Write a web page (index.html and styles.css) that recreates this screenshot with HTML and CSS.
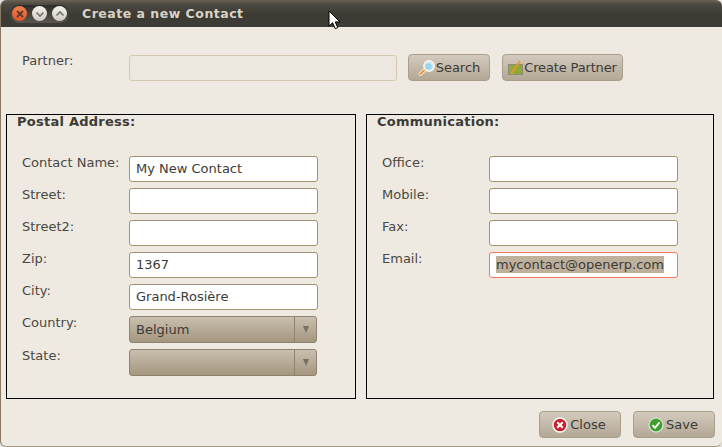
FILE: index.html
```html
<!DOCTYPE html>
<html lang="en">
<head>
    <meta charset="UTF-8">
    <title>Create a new Contact</title>
    <link rel="stylesheet" href="styles.css">
</head>
<body>
    <div class="window">
        <div class="titlebar">
            <div class="win-buttons">
                <span class="win-btn win-close">
                    <svg width="10" height="10" viewBox="0 0 10 10"><path d="M2 2l6 6M8 2l-6 6" stroke="#5a3a2c" stroke-width="1.8" fill="none"/></svg>
                </span>
                <span class="win-btn">
                    <svg width="10" height="10" viewBox="0 0 10 10"><path d="M1.5 3.5L5 7l3.5-3.5" stroke="#77736a" stroke-width="1.6" fill="none"/></svg>
                </span>
                <span class="win-btn">
                    <svg width="10" height="10" viewBox="0 0 10 10"><path d="M1.5 6.5L5 3l3.5 3.5" stroke="#77736a" stroke-width="1.6" fill="none"/></svg>
                </span>
            </div>
            <span class="win-title">Create a new Contact</span>
        </div>

        <div class="content">
            <div class="partner-row">
                <label class="field-label">Partner:</label>
                <div class="entry entry-disabled"></div>
                <button class="btn btn-search">
                    <svg width="17" height="17" viewBox="0 0 17 17">
                        <path d="M2.5 15l4.5-4.5" stroke="#fff" stroke-width="3.4" stroke-linecap="round"/>
                        <path d="M2.5 15l4.5-4.5" stroke="#e8963c" stroke-width="2.2" stroke-linecap="round"/>
                        <circle cx="11" cy="7" r="5.2" fill="#cdebf8" stroke="#f6f6f2" stroke-width="1.4"/>
                        <circle cx="10.5" cy="7.5" r="3.2" fill="#9ed3ea"/>
                    </svg>
                    Search
                </button>
                <button class="btn btn-create">
                    <svg width="15" height="16" viewBox="0 0 15 16">
                        <rect x="0.5" y="4.5" width="14" height="10" fill="#8fa83c" stroke="#8d8a78"/>
                        <path d="M3 14L12 1" stroke="#e89a20" stroke-width="1.8"/>
                    </svg>
                    Create Partner
                </button>
            </div>

            <div class="panels">
                <div class="panel panel-left">
                    <div class="panel-title">Postal Address:</div>
                    <div class="form">
                        <label class="field-label">Contact Name:</label>
                        <div class="entry">My New Contact</div>
                        <label class="field-label">Street:</label>
                        <div class="entry"></div>
                        <label class="field-label">Street2:</label>
                        <div class="entry"></div>
                        <label class="field-label">Zip:</label>
                        <div class="entry">1367</div>
                        <label class="field-label">City:</label>
                        <div class="entry">Grand-Rosière</div>
                        <label class="field-label">Country:</label>
                        <div class="combo"><span class="combo-text">Belgium</span><span class="combo-arrow"></span></div>
                        <label class="field-label">State:</label>
                        <div class="combo"><span class="combo-text"></span><span class="combo-arrow"></span></div>
                    </div>
                </div>
                <div class="panel panel-right">
                    <div class="panel-title">Communication:</div>
                    <div class="form">
                        <label class="field-label">Office:</label>
                        <div class="entry"></div>
                        <label class="field-label">Mobile:</label>
                        <div class="entry"></div>
                        <label class="field-label">Fax:</label>
                        <div class="entry"></div>
                        <label class="field-label">Email:</label>
                        <div class="entry entry-focus"><span class="selected">mycontact@openerp.com</span></div>
                    </div>
                </div>
            </div>

            <div class="actions">
                <button class="btn btn-action">
                    <svg width="16" height="16" viewBox="0 0 16 16">
                        <circle cx="8" cy="8" r="7" fill="#c8202c" stroke="#fff" stroke-width="1.4"/>
                        <path d="M5.2 5.2l5.6 5.6M10.8 5.2l-5.6 5.6" stroke="#fff" stroke-width="2"/>
                    </svg>
                    Close
                </button>
                <button class="btn btn-action">
                    <svg width="16" height="16" viewBox="0 0 16 16">
                        <circle cx="8" cy="8" r="7" fill="#3f9e2c" stroke="#dfe8d8" stroke-width="1.2"/>
                        <path d="M4.5 8.2l2.5 2.6 4.5-5.4" stroke="#fff" stroke-width="1.8" fill="none"/>
                    </svg>
                    Save
                </button>
            </div>
        </div>

        <svg class="cursor" width="14" height="20" viewBox="0 0 14 20">
            <path d="M1 1v15l3.6-3.3 2.6 6 2.6-1.1-2.6-5.7H12z" fill="#fff" stroke="#000" stroke-width="1"/>
        </svg>
    </div>
</body>
</html>
```

FILE: styles.css
```css
html, body {
    margin: 0;
    padding: 0;
    background: #e9e5de;
}

body {
    font-family: "DejaVu Sans", sans-serif;
    font-size: 13px;
    color: #3c3b37;
}

.window {
    position: relative;
    width: 722px;
    height: 447px;
    box-sizing: border-box;
    display: flex;
    flex-direction: column;
    overflow: hidden;
    background: #eeeae2;
    border-radius: 6px;
    border-left: 1px solid #8a7a62;
    border-bottom: 1px solid #a89a80;
}

/* title bar */
.titlebar {
    height: 27px;
    flex: none;
    display: flex;
    align-items: center;
    padding-left: 9px;
    background: linear-gradient(#6b6355 0, #4d4a41 4px, #3d3b34 14px, #3c3b35 100%);
}

.win-buttons {
    box-sizing: border-box;
    width: 59px;
    height: 18px;
    display: flex;
    gap: 5px;
    align-items: center;
    justify-content: center;
    border-radius: 9px;
    background: linear-gradient(#2e2c28, #5a574f);
}

.win-btn {
    width: 15px;
    height: 15px;
    border-radius: 50%;
    background: linear-gradient(#f4f2ec, #cfcbc2);
    display: flex;
    align-items: center;
    justify-content: center;
}

.win-close {
    background: linear-gradient(#f0814f, #e0562a);
}

.win-title {
    margin-left: 13px;
    font-weight: bold;
    font-size: 12.5px;
    letter-spacing: 0.5px;
    color: #d8d3c6;
}

.content {
    flex: 1;
    display: flex;
    flex-direction: column;
}

/* partner row */
.partner-row {
    display: flex;
    align-items: flex-start;
    margin-top: 27px;
    padding-left: 21px;
    height: 60px;
}

.partner-row .field-label {
    width: 107px;
    flex: none;
}

.partner-row .entry {
    width: 268px;
    flex: none;
    margin-top: 1px;
}

.btn-search {
    margin-left: 11px;
    width: 82px;
}

.btn-create {
    margin-left: 12px;
    width: 121px;
    letter-spacing: -0.15px;
    gap: 3px;
    background: linear-gradient(#c4b8a6, #a2937e);
}

/* panels */
.panels {
    display: flex;
    gap: 10px;
    padding-left: 5px;
}

.panel {
    box-sizing: border-box;
    height: 285px;
    border: 1px solid #000;
}

.panel-left {
    width: 350px;
}

.panel-right {
    width: 348px;
}

.panel-title {
    font-weight: bold;
    letter-spacing: 0.25px;
    color: #3c3b37;
    padding-left: 10px;
    line-height: 14px;
}

.form {
    display: grid;
    grid-template-columns: 107px 189px;
    row-gap: 6px;
    margin-top: 27px;
    padding-left: 15px;
}

.field-label {
    color: #4a4842;
    line-height: 14px;
    display: block;
}

/* inputs */
.entry {
    box-sizing: border-box;
    height: 26px;
    padding: 0 6px;
    line-height: 24px;
    background: #fff;
    border: 1px solid #a39174;
    border-radius: 3px;
    white-space: nowrap;
    color: #3c3b37;
}

.entry-disabled {
    background: #ede8df;
    border-color: #d6c9b2;
}

.entry-focus {
    border-color: #f07a62;
}

.selected {
    display: inline-block;
    line-height: 17px;
    background: #bfb09c;
}

.combo {
    box-sizing: border-box;
    height: 27px;
    display: flex;
    width: 188px;
    border: 1px solid #8f8370;
    border-radius: 3px;
    background: linear-gradient(#c9bfae, #a5967f);
}

.combo-text {
    flex: 1;
    padding-left: 6px;
    line-height: 25px;
    color: #3c3b37;
}

.combo-arrow {
    width: 21px;
    flex: none;
    display: flex;
    align-items: center;
    justify-content: center;
    border-left: 1px solid #8f8370;
}

.combo-arrow::after {
    content: "";
    border-left: 3.5px solid transparent;
    border-right: 3.5px solid transparent;
    border-top: 7px solid #77705f;
}

/* buttons */
.btn {
    box-sizing: border-box;
    height: 27px;
    display: flex;
    align-items: center;
    justify-content: center;
    gap: 1px;
    padding: 0;
    font-family: inherit;
    font-size: 13px;
    color: #3c3b37;
    border: 1px solid #ab9f8c;
    border-radius: 4px;
    background: linear-gradient(#d3cbbe, #b3a795);
}

.actions {
    display: flex;
    justify-content: flex-end;
    gap: 12px;
    margin-top: 12px;
    padding-right: 7px;
}

.btn-action {
    width: 82px;
    gap: 2px;
    padding-right: 2px;
}

/* mouse pointer caught in the shot */
.cursor {
    position: absolute;
    left: 327px;
    top: 10px;
}
```
